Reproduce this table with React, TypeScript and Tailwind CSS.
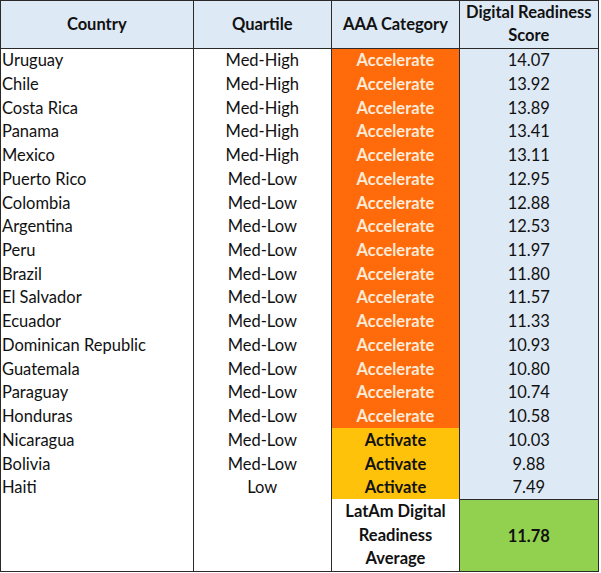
import React from "react";

type Row = { country: string; quartile: string; cat: "Accelerate" | "Activate"; score: string };

const rows: Row[] = [
  { country: "Uruguay", quartile: "Med-High", cat: "Accelerate", score: "14.07" },
  { country: "Chile", quartile: "Med-High", cat: "Accelerate", score: "13.92" },
  { country: "Costa Rica", quartile: "Med-High", cat: "Accelerate", score: "13.89" },
  { country: "Panama", quartile: "Med-High", cat: "Accelerate", score: "13.41" },
  { country: "Mexico", quartile: "Med-High", cat: "Accelerate", score: "13.11" },
  { country: "Puerto Rico", quartile: "Med-Low", cat: "Accelerate", score: "12.95" },
  { country: "Colombia", quartile: "Med-Low", cat: "Accelerate", score: "12.88" },
  { country: "Argentina", quartile: "Med-Low", cat: "Accelerate", score: "12.53" },
  { country: "Peru", quartile: "Med-Low", cat: "Accelerate", score: "11.97" },
  { country: "Brazil", quartile: "Med-Low", cat: "Accelerate", score: "11.80" },
  { country: "El Salvador", quartile: "Med-Low", cat: "Accelerate", score: "11.57" },
  { country: "Ecuador", quartile: "Med-Low", cat: "Accelerate", score: "11.33" },
  { country: "Dominican Republic", quartile: "Med-Low", cat: "Accelerate", score: "10.93" },
  { country: "Guatemala", quartile: "Med-Low", cat: "Accelerate", score: "10.80" },
  { country: "Paraguay", quartile: "Med-Low", cat: "Accelerate", score: "10.74" },
  { country: "Honduras", quartile: "Med-Low", cat: "Accelerate", score: "10.58" },
  { country: "Nicaragua", quartile: "Med-Low", cat: "Activate", score: "10.03" },
  { country: "Bolivia", quartile: "Med-Low", cat: "Activate", score: "9.88" },
  { country: "Haiti", quartile: "Low", cat: "Activate", score: "7.49" },
];

export default function App() {
  return (
    <div
      className="w-[598.5px] bg-white text-[#111111] border-[1.5px] border-[#2a2a2a] flex flex-col text-[16.5px] leading-none"
      style={{ fontFamily: "Lato, 'Noto Sans', sans-serif" }}
    >
      {/* header */}
      <div className="flex h-[47.5px] bg-[#dde9f5] border-b-[1.5px] border-[#2a2a2a] font-bold">
        <div className="w-[192.5px] border-r-[1.5px] border-[#2a2a2a] flex items-center justify-center">Country</div>
        <div className="w-[138.5px] border-r-[1.5px] border-[#2a2a2a] flex items-center justify-center">Quartile</div>
        <div className="w-[128px] border-r-[1.5px] border-[#2a2a2a] flex items-center justify-center">AAA Category</div>
        <div className="flex-1 flex flex-col items-center justify-center text-center leading-[23px]">
          <span>Digital Readiness</span>
          <span>Score</span>
        </div>
      </div>
      {/* body */}
      {rows.map((r) => (
        <div key={r.country} className="flex h-[23.74px]">
          <div className="w-[192.5px] border-r-[1.5px] border-[#2a2a2a] flex items-center pl-[1px]">{r.country}</div>
          <div className="w-[138.5px] border-r-[1.5px] border-[#2a2a2a] flex items-center justify-center">{r.quartile}</div>
          <div
            className={
              r.cat === "Accelerate"
                ? "w-[128px] border-r-[1.5px] border-[#2a2a2a] flex items-center justify-center font-bold bg-[#ff6a0a] text-[#fdebd8]"
                : "w-[128px] border-r-[1.5px] border-[#2a2a2a] flex items-center justify-center font-bold bg-[#ffc20a] text-[#111111]"
            }
          >
            {r.cat}
          </div>
          <div className="flex-1 flex items-center justify-center bg-[#dde9f5]">{r.score}</div>
        </div>
      ))}
      {/* footer */}
      <div className="flex h-[72px]">
        <div className="w-[192.5px] border-r-[1.5px] border-[#2a2a2a]" />
        <div className="w-[138.5px] border-r-[1.5px] border-[#2a2a2a]" />
        <div className="w-[128px] border-r-[1.5px] border-[#2a2a2a] flex flex-col items-center justify-center font-bold leading-[23.5px]">
          <span>LatAm Digital</span>
          <span>Readiness</span>
          <span>Average</span>
        </div>
        <div className="flex-1 flex items-center justify-center bg-[#92d050] font-bold border-t-[1.5px] border-[#2a2a2a]">11.78</div>
      </div>
    </div>
  );
}
